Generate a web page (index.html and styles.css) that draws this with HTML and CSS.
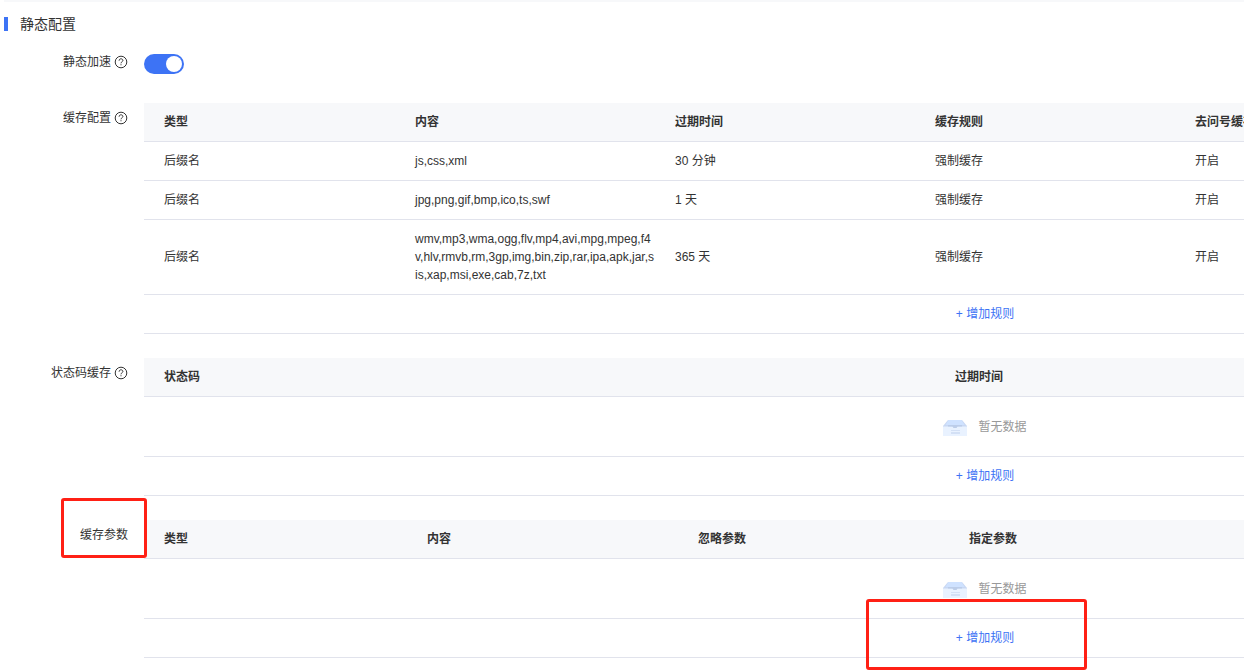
FILE: index.html
```html
<!DOCTYPE html>
<html lang="zh-CN">
<head>
    <meta charset="UTF-8">
    <meta name="viewport" content="width=device-width, initial-scale=1.0">
    <title>静态配置</title>
    <link rel="stylesheet" href="styles.css">
</head>
<body>
    <!-- Shared icons -->
    <svg class="sprite" aria-hidden="true">
        <symbol id="icon-help" viewBox="0 0 14 14">
            <circle cx="7" cy="7" r="5.8" fill="none" stroke="#333" stroke-width="1"/>
            <path d="M5.1 5.7C5.1 4.5 5.9 3.8 7 3.8s1.9.7 1.9 1.7C8.9 6.7 7 6.8 7 8.3" fill="none" stroke="#333" stroke-width="1"/>
            <path d="M6.5 9.2h1v1h-1z" fill="#333"/>
        </symbol>
        <symbol id="icon-empty" viewBox="0 0 24 18">
            <path d="M5 2h14l5 6v1H0V8z" fill="#c9d8f3"/>
            <path d="M5.500 2h13l3 5h-19z" fill="#cfe2ff"/>
            <path d="M0 8.500h24V18H0z" fill="#e9f2ff"/>
            <path d="M5 7h14v1.500h-4.500L13.500 10h-3L9.500 8.500H5z" fill="#bccde9"/>
            <path d="M8 12h9v1H8zM8 14h9v2H8z" fill="#d3e0f5"/>
        </symbol>
    </svg>

    <main class="panel">
        <h2 class="panel-title">静态配置</h2>

        <div class="form-item">
            <label class="form-label" for="staticSpeed">静态加速<svg class="help"><use href="#icon-help"/></svg></label>
            <div class="form-content">
                <input class="switch" type="checkbox" role="switch" id="staticSpeed" checked>
            </div>
        </div>

        <div class="form-item">
            <div class="form-label" id="cacheLabel">缓存配置<svg class="help"><use href="#icon-help"/></svg></div>
            <div class="form-content">
                <table class="data-table cache-table" aria-labelledby="cacheLabel">
                    <colgroup>
                        <col class="col-first"><col class="col"><col class="col"><col class="col"><col class="col"><col>
                    </colgroup>
                    <thead>
                        <tr><th>类型</th><th>内容</th><th>过期时间</th><th>缓存规则</th><th>去问号缓存</th><th></th></tr>
                    </thead>
                    <tbody>
                        <tr><td>后缀名</td><td>js,css,xml</td><td>30 分钟</td><td>强制缓存</td><td>开启</td><td></td></tr>
                        <tr><td>后缀名</td><td>jpg,png,gif,bmp,ico,ts,swf</td><td>1 天</td><td>强制缓存</td><td>开启</td><td></td></tr>
                        <tr><td>后缀名</td><td>wmv,mp3,wma,ogg,flv,mp4,avi,mpg,mpeg,f4v,hlv,rmvb,rm,3gp,img,bin,zip,rar,ipa,apk,jar,sis,xap,msi,exe,cab,7z,txt</td><td>365 天</td><td>强制缓存</td><td>开启</td><td></td></tr>
                        <tr><td class="add-cell" colspan="6"><button class="add-btn" type="button">+ 增加规则</button></td></tr>
                    </tbody>
                </table>
            </div>
        </div>

        <div class="form-item">
            <div class="form-label" id="codeLabel">状态码缓存<svg class="help"><use href="#icon-help"/></svg></div>
            <div class="form-content">
                <table class="data-table code-table" aria-labelledby="codeLabel">
                    <colgroup>
                        <col class="col-first"><col>
                    </colgroup>
                    <thead>
                        <tr><th>状态码</th><th>过期时间</th></tr>
                    </thead>
                    <tbody>
                        <tr><td class="empty-cell" colspan="2"><div class="empty"><svg class="empty-icon"><use href="#icon-empty"/></svg>暂无数据</div></td></tr>
                        <tr><td class="add-cell" colspan="2"><button class="add-btn" type="button">+ 增加规则</button></td></tr>
                    </tbody>
                </table>
            </div>
        </div>

        <div class="form-item">
            <div class="form-label" id="paramLabel">缓存参数</div>
            <div class="form-content">
                <table class="data-table param-table" aria-labelledby="paramLabel">
                    <colgroup>
                        <col class="col-first"><col class="col"><col class="col"><col>
                    </colgroup>
                    <thead>
                        <tr><th>类型</th><th>内容</th><th>忽略参数</th><th>指定参数</th></tr>
                    </thead>
                    <tbody>
                        <tr><td class="empty-cell" colspan="4"><div class="empty"><svg class="empty-icon"><use href="#icon-empty"/></svg>暂无数据</div></td></tr>
                        <tr><td class="add-cell" colspan="4"><button class="add-btn" type="button">+ 增加规则</button></td></tr>
                    </tbody>
                </table>
            </div>
            <span class="mark mark-label"></span>
            <span class="mark mark-add"></span>
        </div>
    </main>
</body>
</html>
```

FILE: styles.css
```css
/* General */
* {
    box-sizing: border-box;
}
body {
    margin: 0;
    background: #fff;
    color: #333;
    font-family: "Liberation Sans", "Noto Sans CJK SC", sans-serif;
    font-size: 12px;
    line-height: 18px;
    overflow-x: hidden;
}
.sprite {
    display: none;
}

/* Panel */
.panel {
    margin-left: 4px;
    padding-bottom: 12px;
    border-top: 2px solid #f7f8fa;
}
.panel-title {
    margin: 15px 0 16px;
    padding-left: 12px;
    border-left: 4px solid #3d73f5;
    font-size: 14px;
    font-weight: normal;
    line-height: 14px;
}

/* Form rows */
.form-item {
    position: relative;
    display: flex;
    min-height: 32px;
    margin-bottom: 24px;
}
.form-item:last-child {
    margin-bottom: 0;
}
.form-label {
    display: flex;
    flex: none;
    justify-content: flex-end;
    align-items: center;
    gap: 3px;
    width: 140px;
    height: 30px;
    padding-right: 16px;
}
.help {
    width: 14px;
    height: 14px;
}
.form-content {
    flex: 1;
    min-width: 0;
    overflow: hidden;
}

/* Switch */
.switch {
    appearance: none;
    display: block;
    width: 40px;
    height: 20px;
    margin: 7px 0 0;
    padding: 2px;
    border-radius: 10px;
    background: #c4c9d4;
    cursor: pointer;
}
.switch::before {
    content: "";
    display: block;
    width: 16px;
    height: 16px;
    border-radius: 50%;
    background: #fff;
}
.switch:checked {
    background: #3d73f5;
}
.switch:checked::before {
    margin-left: auto;
}

/* Tables */
.data-table {
    width: 1682px;
    table-layout: fixed;
    border-collapse: separate;
    border-spacing: 0;
}
.data-table th,
.data-table td {
    padding: 10px;
    border-bottom: 1px solid #e1e3ec;
    text-align: left;
    vertical-align: middle;
    word-break: break-all;
}
.data-table th:first-child,
.data-table td:first-child {
    padding-left: 20px;
}
.data-table th {
    background: #f7f8fa;
    font-weight: bold;
}
.cache-table .col-first {
    width: 261px;
}
.cache-table .col {
    width: 260px;
}
.code-table .col-first {
    width: 801px;
}
.param-table .col-first {
    width: 273px;
}
.param-table .col {
    width: 271px;
}
.data-table td.add-cell:first-child,
.data-table td.empty-cell:first-child {
    padding: 10px;
    text-align: center;
}
.data-table .empty-cell {
    height: 60px;
}
.add-btn {
    display: block;
    margin: 0 auto;
    padding: 0;
    border: none;
    background: none;
    color: #3d73f5;
    font: inherit;
    cursor: pointer;
}
.empty {
    display: flex;
    justify-content: center;
    align-items: center;
    gap: 11px;
    color: #999;
}
.empty-icon {
    width: 24px;
    height: 18px;
}

/* Highlight boxes */
.mark {
    position: absolute;
    border: 3px solid #ff2015;
    border-radius: 3px;
    pointer-events: none;
}
.mark-label {
    top: -22px;
    left: 57px;
    width: 86px;
    height: 60px;
}
.mark-add {
    top: 79px;
    left: 862px;
    width: 221px;
    height: 71px;
}
```
